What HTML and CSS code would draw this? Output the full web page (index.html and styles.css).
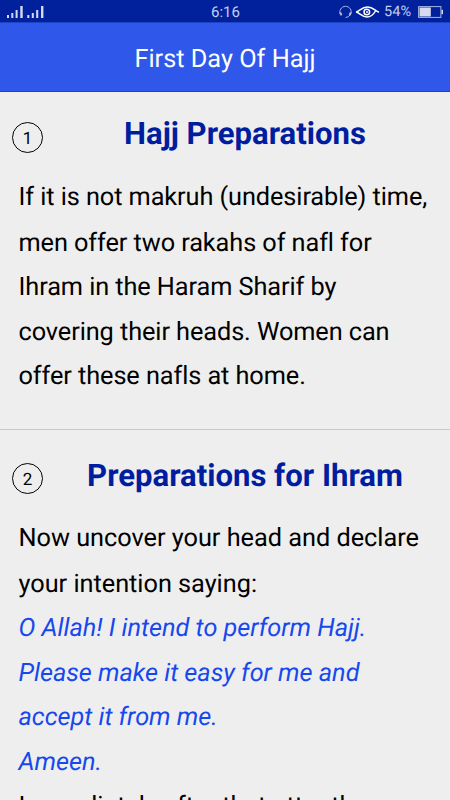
FILE: index.html
```
<!DOCTYPE html>
<html lang="en">
  <head>
    <meta charset="UTF-8" />
    <meta name="viewport" content="width=device-width, initial-scale=1.0" />
    <title>First Day Of Hajj</title>
    <link rel="stylesheet" href="styles.css">
  </head>
  <body>
    <div class="status-bar">
      <svg class="signal" width="38" height="13" viewBox="0 0 38 13">
        <path d="M0 10h2v3H0zM4.3 8h2v5h-2zM8.6 5h2v8h-2zM13.3 1h2.4v12h-2.4zM20.3 10h2v3h-2zM24.8 8h2v5h-2zM29.2 5h2v8h-2zM34 1h2.4v12H34z" />
      </svg>
      <span class="clock">6:16</span>
      <div class="status-right">
        <svg class="headset" width="15" height="14" viewBox="0 0 15 14">
          <path d="M2.4 9.5A5.7 5.7 0 1 1 12.8 9.2M12.2 9.7A5.5 5.5 0 0 1 7.5 12.5" />
          <path class="pad" d="M2.2 7.4l1.3 3M12.8 7.4l-1.3 3" />
        </svg>
        <svg class="eye" width="25" height="12" viewBox="0 0 25 12">
          <path d="M1 6C4 5.8 6.5 1 12.5 1S20 5.2 24 6.2M1 6C5 6.8 7 11 12 11S19 7.6 20.5 5" />
          <circle cx="11.8" cy="6" r="2.8" />
          <circle class="pupil" cx="12" cy="6" r="1" />
        </svg>
        <span class="percent">54%</span>
        <svg class="battery" width="26" height="12" viewBox="0 0 26 12">
          <rect class="case" x="0.6" y="0.6" width="22.3" height="10.8" />
          <rect class="level" x="1.5" y="1.5" width="11.3" height="9" />
          <rect class="level" x="23.5" y="3.8" width="1.5" height="4.4" />
        </svg>
      </div>
    </div>
    <header class="app-bar">
      <h1>First Day Of Hajj</h1>
    </header>
    <main>
      <section class="step">
        <div class="step-header">
          <span class="number">1</span>
          <h2>Hajj Preparations</h2>
        </div>
        <p>
          If it is not makruh (undesirable) time,<br>
          men offer two rakahs of nafl for<br>
          Ihram in the Haram Sharif by<br>
          covering their heads. Women can<br>
          offer these nafls at home.
        </p>
      </section>
      <section class="step">
        <div class="step-header">
          <span class="number">2</span>
          <h2>Preparations for Ihram</h2>
        </div>
        <p>
          Now uncover your head and declare<br>
          your intention saying:<br>
          <em>O Allah! I intend to perform Hajj.<br>
          Please make it easy for me and<br>
          accept it from me.<br>
          Ameen.</em><br>
          Immediately after that utter the
        </p>
      </section>
    </main>
  </body>
</html>
```

FILE: styles.css
```
body {
  font-family: Roboto, sans-serif;
  margin: 0;
  padding: 0;
  height: 800px;
  overflow: hidden;
  background-color: #eee;
  color: #000;
  text-rendering: geometricPrecision;
}
.status-bar {
  display: grid;
  grid-template-columns: 1fr auto 1fr;
  align-items: center;
  height: 22px;
  padding: 0 6px 0 7px;
  background-color: #00219b;
  color: #c5cdec;
  font-size: 15px;
}
.signal,
.level {
  fill: #d5daf0;
}
.signal {
  margin-top: -1px;
}
.clock {
  line-height: 22px;
  margin-top: 1px;
}
.status-right {
  display: flex;
  align-items: center;
  justify-content: flex-end;
}
.headset,
.eye,
.case {
  fill: none;
  stroke: #a9b5e2;
}
.headset .pad {
  stroke-width: 2;
}
.eye {
  margin-left: 2px;
  stroke: #fff;
  stroke-width: 1.5;
}
.eye .pupil {
  fill: #fff;
  stroke: none;
}
.percent {
  margin: 0 7px 0 4px;
  font-size: 14.5px;
}
.app-bar {
  height: 70px;
  box-sizing: border-box;
  background-color: #2f57e9;
  border-top: 1px solid #1c43c3;
  border-bottom: 1px solid #0d43df;
}
.app-bar h1 {
  margin: 0;
  line-height: 74px;
  text-align: center;
  color: #fff;
  font-size: 25.3px;
  font-weight: 400;
}
.step {
  height: 337px;
  border-bottom: 1px solid #c9c9c9;
}
.step + .step {
  padding-top: 4px;
  border-bottom: 0;
}
.step-header {
  display: flex;
  padding: 19px 0 0 12px;
}
.number {
  width: 29px;
  height: 29px;
  margin-top: 11px;
  border: 1px solid #000;
  border-radius: 50%;
  text-align: center;
  line-height: 32px;
  font-size: 17px;
}
.step + .step .number {
  margin-top: 10px;
}
.step h2 {
  flex: 1;
  margin: 1px 3px -1px 0;
  line-height: 44px;
  text-align: center;
  color: #001da0;
  font-size: 31.1px;
  font-weight: 700;
}
.step p {
  margin: 19px 0 0 18.5px;
  white-space: nowrap;
  font-size: 25.3px;
  line-height: 44.5px;
  letter-spacing: -0.08px;
  font-variant-ligatures: none;
}
.step p::first-line {
  line-height: 47.5px;
}
.step + .step p {
  margin-top: 18px;
  letter-spacing: -0.02px;
}
.step em {
  color: #1648ed;
}
```
